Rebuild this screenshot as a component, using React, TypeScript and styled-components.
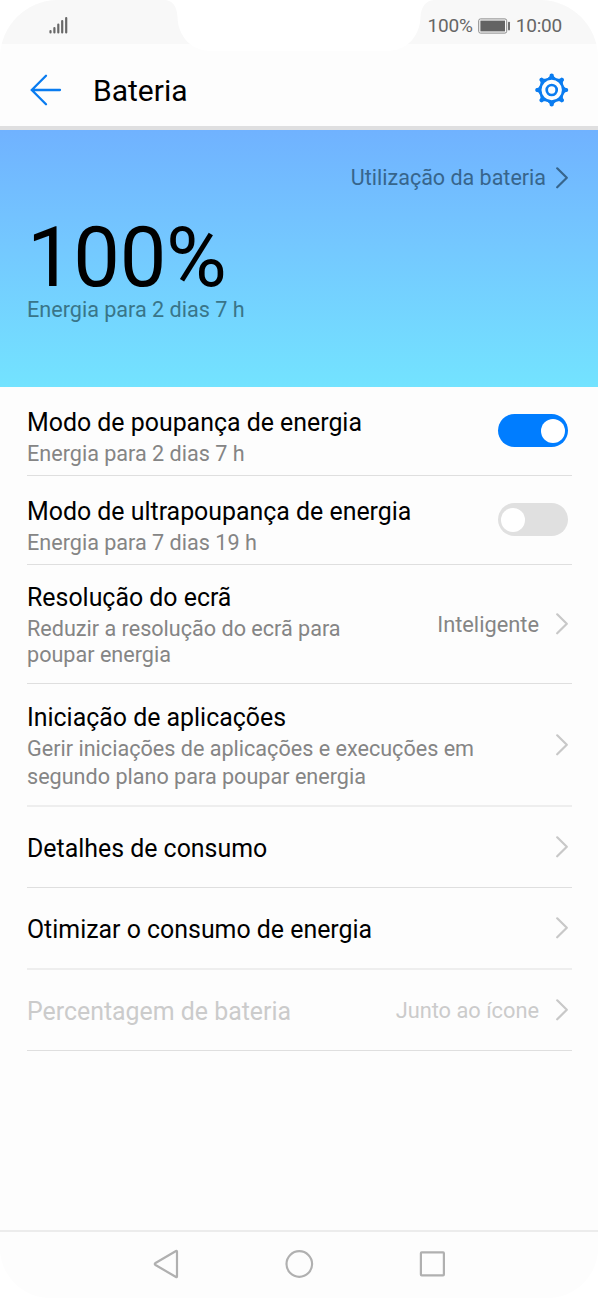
import React from "react";
import styled, { createGlobalStyle } from "styled-components";

const App = () => {

    return (
        <>
        <GlobalStyle />
        <Phone>
            <StatusBar>
                <Signal viewBox="0 0 19 18">
                    <path d="M1.500 15v1.500M5.400 12v4.500M9.300 8.500v8M13.200 5v11.500M17.200 2v14.500" />
                </Signal>

                <Status>
                    <StatusText>100%</StatusText>
                    <BatteryIcon viewBox="0 0 33 16">
                        <rect x="0.7" y="0.9" width="28" height="14.2" rx="1.8" fill="none" stroke="#8a8a8a" strokeWidth="1" />
                        <rect x="2.4" y="2.6" width="24.6" height="10.8" fill="#636363" />
                        <rect x="30" y="3.8" width="2" height="8.6" rx="0.8" fill="#707070" />
                    </BatteryIcon>
                    <StatusText>10:00</StatusText>
                </Status>
            </StatusBar>

            <Notch viewBox="0 0 270 52">
                <path d="M0 0C9 0 13 7 13.500 17C14 36 27 51 47 51H223C243 51 256 36 256.500 17C257 7 262 0 271 0Z" />
            </Notch>

            <Header>
                <BackIcon viewBox="0 0 32 32">
                    <path d="M30 16H2M16 1.800L1.800 16L16 30.200" />
                </BackIcon>
                <PageTitle>Bateria</PageTitle>
                <Gear />
            </Header>

            <Hero>
                <Usage>
                    <span>Utilização da bateria</span>
                    <Chevron color="#37658c" gap={9} />
                </Usage>
                <Percent>100%</Percent>
                <Remaining>Energia para 2 dias 7 h</Remaining>
            </Hero>

            <List>
                <Row $height={89}>
                    <Texts $top={21}>
                        <Title>Modo de poupança de energia</Title>
                        <Sub>Energia para 2 dias 7 h</Sub>
                    </Texts>
                    <Toggle $on><Knob /></Toggle>
                </Row>

                <Row $height={89}>
                    <Texts $top={21}>
                        <Title>Modo de ultrapoupança de energia</Title>
                        <Sub>Energia para 7 dias 19 h</Sub>
                    </Texts>
                    <Toggle><Knob /></Toggle>
                </Row>

                <Row $height={119}>
                    <Texts $top={18}>
                        <Title>Resolução do ecrã</Title>
                        <Sub $line={26}>Reduzir a resolução do ecrã para<br />poupar energia</Sub>
                    </Texts>
                    <Value>Inteligente</Value>
                    <Chevron />
                </Row>

                <Row $height={123} $soft>
                    <Texts $top={19}>
                        <Title>Iniciação de aplicações</Title>
                        <Sub $line={28} $gap={2}>Gerir iniciações de aplicações e execuções em<br />segundo plano para poupar energia</Sub>
                    </Texts>
                    <Chevron />
                </Row>

                <Row $height={81}>
                    <Texts $top={27}>
                        <Title>Detalhes de consumo</Title>
                    </Texts>
                    <Chevron />
                </Row>

                <Row $height={82} $soft>
                    <Texts $top={27}>
                        <Title>Otimizar o consumo de energia</Title>
                    </Texts>
                    <Chevron />
                </Row>

                <Row $height={81}>
                    <Texts $top={27}>
                        <Title $disabled>Percentagem de bateria</Title>
                    </Texts>
                    <Value $disabled>Junto ao ícone</Value>
                    <Chevron />
                </Row>
            </List>

            <NavBar>
                <NavIcon viewBox="0 0 30 30">
                    <path d="M26 2.600V27.400Q26 28.600 25 28L4.500 16Q3 15 4.500 14L25 2Q26 1.400 26 2.600Z" />
                </NavIcon>
                <NavIcon viewBox="0 0 30 30">
                    <circle cx="15.300" cy="15" r="12.800" />
                </NavIcon>
                <NavIcon viewBox="0 0 30 30">
                    <rect x="3.900" y="3.400" width="23" height="23" rx="0.800" />
                </NavIcon>
            </NavBar>
        </Phone>
        </>
    )
}

export default App

const Chevron = ({ color = "#c8c8c8", gap = 16 }: { color?: string; gap?: number }) => (
    <ChevronSvg viewBox="0 0 14 22" stroke={color} $gap={gap}>
        <path d="M2.200 1.300L11.800 10.800L2.200 20.300" />
    </ChevronSvg>
)

const Gear = () => (
    <GearSvg viewBox="-16.700 -17 34 34">
        <circle r="11.500" strokeWidth="2.600" />
        <circle r="5" strokeWidth="2.700" />
        {[0, 45, 90, 135, 180, 225, 270, 315].map((angle) => (
            <path
                key={angle}
                d="M-4.500 -11.500L-2.300 -13.500L-1.800 -15.800Q0 -17.400 1.800 -15.800L2.300 -13.500L4.500 -11.500Z"
                transform={`rotate(${angle})`}
                fill="#0a7cf0"
                stroke="none"
            />
        ))}
    </GearSvg>
)

const GlobalStyle = createGlobalStyle`
body {
    margin: 0;
    background-color: #ffffff;
    font-family: Roboto, "Liberation Sans", sans-serif;
}

* {
    box-sizing: border-box;
}
`;

const Phone = styled.div`
position: relative;
width: 598px;
height: 1298px;
display: flex;
flex-direction: column;
overflow: hidden;
background-color: #fdfdfd;
border-radius: 58px 58px 50px 50px;
`;

const StatusBar = styled.div`
height: 44px;
flex-shrink: 0;
padding: 8px 36px 0 49px;
display: flex;
justify-content: space-between;
background-color: #f8f8f8;
`;

const Signal = styled.svg`
width: 19px;
height: 18px;
margin-top: 8px;
fill: none;
stroke: #686868;
stroke-width: 2.2;
stroke-linecap: round;
`;

const Status = styled.div`
height: 35px;
display: flex;
align-items: center;
`;

const StatusText = styled.div`
color: #666666;
font-size: 19px;
letter-spacing: -0.2px;
line-height: 24px;
`;

const BatteryIcon = styled.svg`
width: 33px;
height: 16px;
margin: 0 5px;
`;

const Notch = styled.svg`
position: absolute;
top: 0;
left: 164px;
width: 270px;
height: 52px;
fill: #ffffff;
`;

const Header = styled.div`
height: 86px;
flex-shrink: 0;
padding: 0 29px 0 30px;
display: flex;
align-items: center;
border-bottom: 4px solid #dfdfe0;
`;

const BackIcon = styled.svg`
width: 32px;
height: 32px;
margin-top: 9px;
fill: none;
stroke: #0a7cf0;
stroke-width: 2.3;
stroke-linecap: round;
`;

const PageTitle = styled.div`
flex: 1;
margin: 12px 0 0 31px;
color: #000000;
font-size: 30px;
line-height: 36px;
`;

const GearSvg = styled.svg`
width: 34px;
height: 34px;
margin-top: 9px;
overflow: visible;
fill: none;
stroke: #0a7cf0;
`;

const Hero = styled.div`
height: 257px;
flex-shrink: 0;
padding: 34px 26px 0 27px;
background: linear-gradient(#70b2ff, #74c8ff 45%, #73e3ff);
`;

const Usage = styled.div`
display: flex;
justify-content: flex-end;
align-items: center;
color: #37658c;
font-size: 21.5px;
line-height: 26px;

span {
    padding-top: 1px;
}
`;

const Percent = styled.div`
margin-top: 29px;
color: #000000;
font-size: 83px;
letter-spacing: -0.3px;
line-height: 76px;
`;

const Remaining = styled.div`
margin-top: 1px;
color: #397589;
font-size: 21.6px;
line-height: 26px;
`;

const List = styled.div`
flex: 1;
padding: 0 26px 0 27px;
`;

const Row = styled.div<{ $height: number; $soft?: boolean }>`
height: ${({ $height }) => $height}px;
display: flex;
align-items: center;
border-bottom: ${({ $soft }) => ($soft ? "2px solid #eeeeee" : "1px solid #dfdfdf")};
`;

const Texts = styled.div<{ $top: number }>`
flex: 1;
align-self: flex-start;
padding-top: ${({ $top }) => $top}px;
`;

const Title = styled.div<{ $disabled?: boolean }>`
color: ${({ $disabled }) => ($disabled ? "#cbcbcb" : "#000000")};
font-size: 24.9px;
line-height: 30px;
`;

const Sub = styled.div<{ $line?: number; $gap?: number }>`
margin-top: ${({ $gap = 3 }) => $gap}px;
color: #858585;
font-size: 21.6px;
line-height: ${({ $line = 26 }) => $line}px;
`;

const Value = styled.div<{ $disabled?: boolean }>`
padding-top: 2px;
color: ${({ $disabled }) => ($disabled ? "#cbcbcb" : "#858585")};
font-size: 21.8px;
line-height: 26px;
`;

const Toggle = styled.div<{ $on?: boolean }>`
width: 70px;
height: 33px;
margin: 0 4.5px 1px 0;
padding: 0 3px;
display: flex;
align-items: center;
justify-content: ${({ $on }) => ($on ? "flex-end" : "flex-start")};
border-radius: 17px;
background-color: ${({ $on }) => ($on ? "#007dff" : "#e0e0e0")};
`;

const Knob = styled.div`
width: 24px;
height: 24px;
border-radius: 50%;
background-color: #ffffff;
`;

const ChevronSvg = styled.svg<{ $gap: number }>`
width: 14px;
height: 22px;
margin: 0 3px 0 ${({ $gap }) => $gap}px;
fill: none;
stroke-width: 2.2;
stroke-linecap: round;
stroke-linejoin: round;
`;

const NavBar = styled.div`
height: 68px;
flex-shrink: 0;
padding-bottom: 2px;
display: flex;
justify-content: center;
align-items: center;
gap: 103px;
border-top: 2px solid #ececec;
`;

const NavIcon = styled.svg`
width: 30px;
height: 30px;
fill: none;
stroke: #b0b0b0;
stroke-width: 2.2;
stroke-linejoin: round;
`;
